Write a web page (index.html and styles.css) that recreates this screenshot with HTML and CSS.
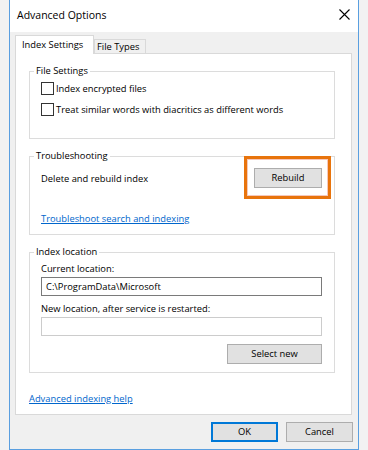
FILE: index.html
```html
<!DOCTYPE html>
<html>
<head>
<meta charset="utf-8">
<link rel="stylesheet" href="styles.css">
</head>
<body>
<div class="window">
  <div class="titlebar">
    <span class="title">Advanced Options</span>
    <svg class="close" width="11" height="11" viewBox="0 0 11 11"><path d="M0.5 0.5L10.5 10.5M10.5 0.5L0.5 10.5" stroke="#000" stroke-width="1.1" fill="none"/></svg>
  </div>
  <div class="client">
    <div class="tabs">
      <div class="tab active">Index Settings</div>
      <div class="tab">File Types</div>
    </div>
    <div class="panel">
      <fieldset class="group g1">
        <legend>File Settings</legend>
        <label class="check"><span class="box"></span>Index encrypted files</label>
        <label class="check"><span class="box"></span>Treat similar words with diacritics as different words</label>
      </fieldset>
      <fieldset class="group g2">
        <legend>Troubleshooting</legend>
        <div class="row">
          <span>Delete and rebuild index</span>
          <button class="btn rebuild">Rebuild</button>
        </div>
        <a class="link trouble">Troubleshoot search and indexing</a>
      </fieldset>
      <fieldset class="group g3">
        <legend>Index location</legend>
        <div class="lbl first">Current location:</div>
        <div class="input">C:\ProgramData\Microsoft</div>
        <div class="lbl">New location, after service is restarted:</div>
        <div class="input disabled"></div>
        <div class="btnrow"><button class="btn select">Select new</button></div>
      </fieldset>
      <a class="link help">Advanced indexing help</a>
    </div>
    <div class="footer">
      <button class="btn ok">OK</button>
      <button class="btn cancel">Cancel</button>
    </div>
  </div>
</div>
</body>
</html>
```
FILE: styles.css
```css
* { box-sizing: border-box; }
html, body { margin: 0; padding: 0; }
body {
  background: #f2f2f2;
  font-family: "Open Sans", "Noto Sans", sans-serif;
  font-size: 9.35px;
  color: #000;
  width: 368px;
  height: 450px;
  overflow: hidden;
}
.window {
  margin-left: 9px;
  width: 350px;
  height: 450px;
  border: 1px solid #5a9fe0;
  border-top: none;
  background: #f0f0f0;
  display: flex;
  flex-direction: column;
}
.titlebar {
  height: 32px;
  background: #fff;
  display: flex;
  align-items: flex-start;
  padding-left: 7px;
}
.title {
  font-size: 10.5px;
  line-height: 14px;
  margin-top: 8px;
}
.close {
  margin-left: auto;
  margin-right: 8px;
  margin-top: 9px;
  display: block;
}
.client {
  padding: 3px 6px 0 5px;
  display: flex;
  flex-direction: column;
}
.tabs {
  display: flex;
  align-items: flex-end;
  height: 19px;
  margin-bottom: -1px;
  position: relative;
  z-index: 1;
}
.tab {
  border: 1px solid #d9d9d9;
  border-bottom: none;
  background: #f0f0f0;
  height: 14px;
  width: 52px;
  padding-left: 2px;
  line-height: 13px;
  margin-bottom: 1px;
  white-space: nowrap;
}
.tab.active {
  background: #fff;
  height: 19px;
  width: 79px;
  padding-left: 6px;
  padding-top: 2px;
  line-height: 14px;
  margin-bottom: 0;
}
.panel {
  background: #fff;
  border: 1px solid #d9d9d9;
  height: 362px;
  padding: 10px 16px 0 13px;
  display: flex;
  flex-direction: column;
}
.group {
  margin: 0;
  border: 1px solid #dcdcdc;
  padding: 0 12px 0 11px;
  min-width: 0;
  display: flex;
  flex-direction: column;
}
.group + .group { margin-top: 10px; }
.group legend {
  padding: 0 2px;
  margin-left: -7px;
  line-height: 14px;
}
.g1 { padding-bottom: 18px; }
.check {
  display: flex;
  align-items: center;
  height: 21px;
}
.box {
  width: 13px;
  height: 13px;
  border: 1px solid #333;
  background: #fff;
  margin-right: 2px;
  flex: none;
}
.g2 { padding-bottom: 8px; }
.row {
  display: flex;
  align-items: center;
  justify-content: space-between;
  height: 22px;
  margin-top: 4px;
}
.link {
  color: #0066cc;
  text-decoration: underline;
  line-height: 15px;
  align-self: flex-start;
}
.trouble { margin-top: 22px; }
.btn {
  font-family: inherit;
  font-size: inherit;
  color: #000;
  background: #e1e1e1;
  border: 1px solid #adadad;
  height: 20px;
  padding: 0;
  line-height: 18px;
  margin: 0;
}
.rebuild {
  width: 68px;
  position: relative;
}
.rebuild::after {
  content: "";
  position: absolute;
  top: -13px;
  left: -11px;
  right: -10px;
  bottom: -12px;
  border: 3px solid #e8740c;
  box-shadow: inset 0 0 0 1px #f6c8bb;
}
.g3 { padding-bottom: 8px; }
.lbl {
  line-height: 14px;
  margin-top: 6px;
}
.lbl.first { margin-top: 3px; }
.input {
  height: 19px;
  border: 1px solid #7a7a7a;
  background: #fff;
  margin-top: 1px;
  padding-left: 4px;
  line-height: 17px;
}
.input.disabled { border-color: #cccccc; }
.btnrow {
  display: flex;
  justify-content: flex-end;
  margin-top: 8px;
}
.select { width: 95px; }
.help { margin-top: 18px; }
.footer {
  display: flex;
  justify-content: flex-end;
  gap: 8px;
  margin-top: 7px;
  margin-right: -1px;
}
.ok, .cancel { width: 67px; }
.ok { border: 2px solid #0078d7; line-height: 16px; }
```
